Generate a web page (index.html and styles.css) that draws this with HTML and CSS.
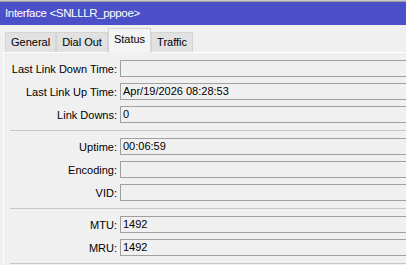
FILE: index.html
```html
<!DOCTYPE html>
<html>
  <head>
    <meta charset="UTF-8">
    <title>Interface &lt;SNLLLR_pppoe&gt;</title>
	<link rel="stylesheet" href="styles.css">
  </head>
  <body>

	<div id="window">

	<div class="titlebar">Interface &lt;SNLLLR_pppoe&gt;</div>

	<div class="tabs">
		<div class="tab">General</div>
		<div class="tab">Dial Out</div>
		<div class="tab active">Status</div>
		<div class="tab">Traffic</div>
	</div>

	<div class="panel">

		<div class="group">
			<div class="row">
				<span class="label">Last Link Down Time:</span>
				<span class="field"></span>
			</div>
			<div class="row">
				<span class="label">Last Link Up Time:</span>
				<span class="field">Apr/19/2026 08:28:53</span>
			</div>
			<div class="row">
				<span class="label">Link Downs:</span>
				<span class="field">0</span>
			</div>
		</div>

		<div class="sep"></div>

		<div class="group">
			<div class="row">
				<span class="label">Uptime:</span>
				<span class="field">00:06:59</span>
			</div>
			<div class="row">
				<span class="label">Encoding:</span>
				<span class="field"></span>
			</div>
			<div class="row">
				<span class="label">VID:</span>
				<span class="field"></span>
			</div>
		</div>

		<div class="sep"></div>

		<div class="group">
			<div class="row">
				<span class="label">MTU:</span>
				<span class="field">1492</span>
			</div>
			<div class="row">
				<span class="label">MRU:</span>
				<span class="field">1492</span>
			</div>
		</div>

		<div class="sep"></div>

	</div>

	</div>

  </body>
</html>
```

FILE: styles.css
```css
 * {
	margin: 0px;
	padding: 0px;
	box-sizing: border-box;
 }
 html, body {
	height: 100%;
	overflow: hidden;
 }
 body {
	background-color: #f0f0f0;
	font-family: "Liberation Sans", Arial, sans-serif;
	font-size: 11px;
	color: #000000;
	white-space: nowrap;
 }
 .titlebar {
	height: 25px;
	border-top: 1px solid #c8c8c8;
	box-shadow: inset 0 1px 0 #a0a0a0;
	background-color: #4b50c8;
	color: #ffffff;
	font-size: 11.5px;
	letter-spacing: -0.35px;
	padding: 5px 0 0 5px;
	line-height: 14px;
 }
 .tabs {
	display: flex;
	align-items: flex-end;
	height: 27px;
	padding-left: 5px;
 }
 .tab {
	height: 20px;
	padding: 0 5px;
	line-height: 19px;
	background-color: #e1e1e1;
	border: 1px solid #d4d4d4;
	border-bottom: none;
 }
 .tab.active {
	height: 25px;
	line-height: 21px;
	background-color: #f4f4f4;
	border-color: #d4d4d4;
	position: relative;
	top: 1px;
 }
 .panel {
	margin-left: 3px;
	border-top: 1px solid #ffffff;
	border-left: 1px solid #ffffff;
	padding-top: 7px;
 }
 .group {
	display: flex;
	flex-direction: column;
	gap: 6px;
 }
 .row {
	display: flex;
	align-items: center;
	height: 17px;
 }
 .label {
	width: 113px;
	text-align: right;
 }
 .field {
	flex: 1;
	margin-left: 3px;
	margin-right: -10px;
	height: 17px;
	border: 1px solid #a0a0a0;
	background-color: #f0f0f0;
	padding-left: 2px;
	line-height: 15px;
 }
 .sep {
	margin: 7px 0 7px 6px;
	border-top: 1px solid #c8c8c8;
 }
```
